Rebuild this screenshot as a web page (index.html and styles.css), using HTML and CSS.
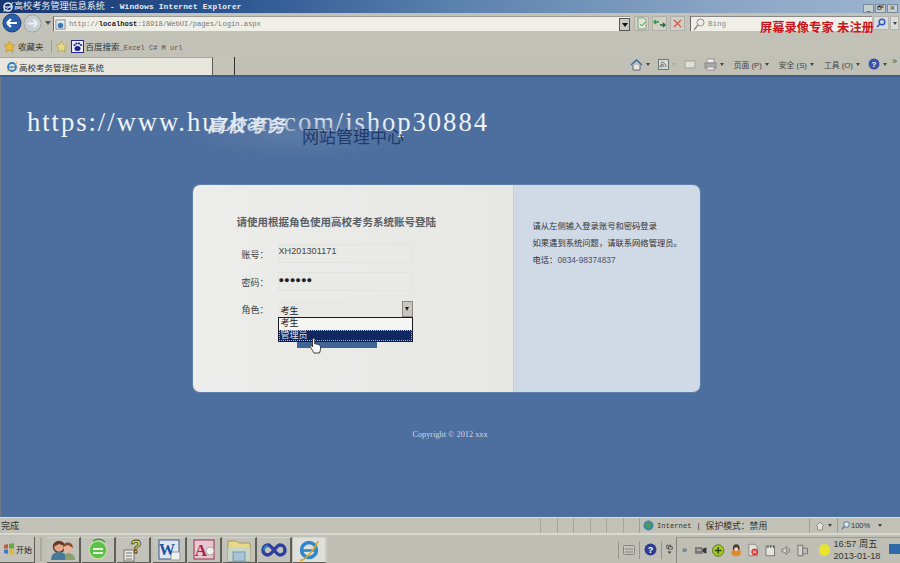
FILE: index.html
```html
<!DOCTYPE html>
<html lang="zh">
<head>
<meta charset="utf-8">
<title>高校考务管理信息系统</title>
<link rel="stylesheet" href="styles.css">
</head>
<body>
<div class="screen">
  <header class="titlebar">
    <div class="title-left">
      <svg class="ie-sm" viewBox="0 0 12 12"><circle cx="6" cy="6" r="4" fill="none" stroke="#dfeaf5" stroke-width="1.6"/><path d="M3 6h6" stroke="#dfeaf5" stroke-width="1.2"/><path d="M1 10C3 11 9 5 11 1" fill="none" stroke="#dfeaf5"/></svg>
      <span class="title-cn">高校考务管理信息系统</span>
      <span class="title-en">- Windows Internet Explorer</span>
    </div>
    <div class="winbtns"><span class="winbtn">_</span><span class="winbtn">🗗</span><span class="winbtn">×</span></div>
  </header>

  <div class="addressrow">
    <div class="navbtns">
      <svg width="20" height="20" viewBox="0 0 20 20"><circle cx="10" cy="10" r="9" fill="#2a5ea8" stroke="#1a3c78"/><path d="M5 10h10M5 10l4-4M5 10l4 4" stroke="#fff" stroke-width="2.2" fill="none"/></svg>
      <svg width="19" height="19" viewBox="0 0 20 20"><circle cx="10" cy="10" r="9" fill="#c7cdd0" stroke="#9aa2a6"/><path d="M15 10H5M15 10l-4-4M15 10l-4 4" stroke="#eef1f2" stroke-width="2" fill="none"/></svg>
      <span class="navdrop"></span>
    </div>
    <div class="addr">
      <svg width="11" height="11" viewBox="0 0 12 12"><rect x="1" y="1" width="10" height="10" fill="#e6e9ea" stroke="#7d8a8f"/><circle cx="6" cy="7" r="3" fill="#3b78b8"/></svg>
      <span class="addr-url">http://<b>localhost</b>:18918/WebUI/pages/Login.aspx</span>
      <span class="combo-arrow"></span>
    </div>
    <div class="addr-tools">
      <span class="toolbtn"><svg width="12" height="13" viewBox="0 0 12 13"><path d="M2 1h6l2 2v9H2z" fill="#dfe6d8" stroke="#7fa87f"/><path d="M4 7l2 2 3-4" stroke="#5a9a5a" fill="none"/></svg></span>
      <span class="toolbtn"><svg width="13" height="11" viewBox="0 0 13 11"><path d="M1 4h5M3 2L1 4l2 2" stroke="#2f9a3a" stroke-width="1.4" fill="none"/><path d="M12 7H7M10 5l2 2-2 2" stroke="#1f6a30" stroke-width="1.4" fill="none"/></svg></span>
      <span class="toolbtn"><svg width="9" height="9" viewBox="0 0 10 10"><path d="M1 1l8 8M9 1l-8 8" stroke="#c8504a" stroke-width="1.4"/></svg></span>
    </div>
    <div class="search">
      <svg width="12" height="13" viewBox="0 0 12 13"><circle cx="7.5" cy="4.500" r="3.500" fill="none" stroke="#8a8f92"/><path d="M5 7l-4 5" stroke="#8a8f92" stroke-width="1.4"/></svg>
      <span class="search-text">Bing</span>
      <span class="watermark-red">屏幕录像专家 未注册</span>
    </div>
    <div class="search-btns">
      <span class="sbtn"><svg width="10" height="10" viewBox="0 0 10 10"><circle cx="6" cy="4" r="2.800" fill="none" stroke="#2a58c0" stroke-width="1.500"/><path d="M4 6L1 9" stroke="#2a58c0" stroke-width="1.600"/></svg></span>
      <span class="sbtn small"><i class="tri"></i></span>
    </div>
  </div>

  <div class="favrow">
    <svg width="13" height="13" viewBox="0 0 14 14"><path d="M7 1l2 4 4 .5-3 3 1 4.500-4-2.300L3 13l1-4.500-3-3L5 5z" fill="#e8b83a" stroke="#b88a20" stroke-width=".6"/></svg>
    <span class="fav-label">收藏夹</span>
    <span class="fav-sep"></span>
    <svg width="13" height="13" viewBox="0 0 14 14"><path d="M7 1l2 4 4 .5-3 3 1 4.500-4-2.300L3 13l1-4.500-3-3L5 5z" fill="#e9d98a" stroke="#a89a40" stroke-width=".7"/></svg>
    <svg class="baidu" width="13" height="13" viewBox="0 0 13 13"><rect x=".5" y=".5" width="12" height="12" fill="#e8ecf6" stroke="#27278f"/><ellipse cx="6.500" cy="8.500" rx="3" ry="2.500" fill="#22228f"/><circle cx="3.500" cy="5" r="1.100" fill="#22228f"/><circle cx="5.500" cy="3.500" r="1.100" fill="#22228f"/><circle cx="8" cy="3.500" r="1.100" fill="#22228f"/><circle cx="10" cy="5" r="1.100" fill="#22228f"/></svg>
    <span class="fav-label">百度搜索<span class="fav-en">_Excel C# M url</span></span>
  </div>

  <div class="tabrow">
    <div class="tab">
      <svg class="ie-tab" width="12" height="12" viewBox="0 0 12 12"><circle cx="6" cy="6" r="4" fill="none" stroke="#2f7fc0" stroke-width="1.800"/><path d="M3 6h6" stroke="#2f7fc0" stroke-width="1.300"/><path d="M1 10C3 11 9 5 11 1" fill="none" stroke="#d8a830"/></svg>
      <span>高校考务管理信息系统</span>
    </div>
    <div class="tab-new"></div>
    <div class="cmdbar">
      <svg width="13" height="13" viewBox="0 0 13 13"><path d="M1 7l5.500-5L12 7" fill="none" stroke="#3a6aa8" stroke-width="1.500"/><path d="M3 7v5h7V7" fill="#e8e8e0" stroke="#667"/></svg><i class="tri"></i>
      <svg class="cmd-gap" width="11" height="11" viewBox="0 0 11 11"><rect x=".5" y=".5" width="10" height="10" fill="#d6dad6" stroke="#6f7a78"/><path d="M3 8a1 1 0 1 1 .1 0M3 5a3 3 0 0 1 3 3M3 3a5 5 0 0 1 5 5" fill="none" stroke="#6f7a78"/></svg><i class="tri faint"></i>
      <svg class="cmd-gap" width="12" height="9" viewBox="0 0 12 9"><path d="M1 1h10v7H1z" fill="#dedfd8" stroke="#9a9f98"/></svg>
      <svg class="cmd-gap" width="13" height="13" viewBox="0 0 13 13"><rect x="3" y="1" width="7" height="4" fill="#eee" stroke="#999"/><rect x="1" y="5" width="11" height="5" fill="#aaa" stroke="#888"/><rect x="3" y="9" width="7" height="3" fill="#eee" stroke="#999"/></svg><i class="tri"></i>
      <span class="cmd-text">页面 (P)</span><i class="tri"></i>
      <span class="cmd-text">安全 (S)</span><i class="tri"></i>
      <span class="cmd-text">工具 (O)</span><i class="tri"></i>
      <svg class="cmd-gap" width="12" height="12" viewBox="0 0 12 12"><circle cx="6" cy="6" r="5.500" fill="#3a52a8"/><text x="6" y="9" text-anchor="middle" font-size="8" font-weight="700" fill="#fff" font-family="Liberation Sans">?</text></svg><i class="tri"></i>
      <span class="chev">»</span>
    </div>
  </div>

  <main class="content">
    <div class="promo">https://www.huzhan.com/ishop30884</div>
    <div class="logo">
      <span class="logo-a">高校考务</span>
      <span class="logo-b">网站管理中心</span>
    </div>
    <section class="card">
      <div class="card-left">
        <h1 class="card-title">请使用根据角色使用高校考务系统账号登陆</h1>
        <div class="form-row"><label class="form-label">账号：</label><div class="field">XH201301171</div></div>
        <div class="form-row"><label class="form-label">密码：</label><div class="field dots">●●●●●●</div></div>
        <div class="form-row role">
          <label class="form-label">角色：</label>
          <div class="select">
            <span>考生</span><span class="select-arrow"></span>
            <ul class="dropdown">
              <li>考生</li>
              <li class="selected">管理员</li>
            </ul>
          </div>
        </div>
        <div class="login-btn"></div>
        <svg class="cursor" width="13" height="17" viewBox="0 0 13 17"><path d="M4 1.500c1-.6 1.700 0 1.700 1V7l1-.2 1.300.3 1.200.4 1.400.6c.8.500.9 1.200.9 2v2.400L10.500 16H5L3.500 13.500 1 9.500c-.4-1 .5-1.500 1.300-1L3.500 10V2.500z" fill="#fff" stroke="#2a2a30" stroke-width=".9"/></svg>
      </div>
      <aside class="card-right">
        <p>请从左侧输入登录账号和密码登录</p>
        <p>如果遇到系统问题，请联系网络管理员。</p>
        <p>电话：<span class="phone">0834-98374837</span></p>
      </aside>
    </section>
    <footer class="copyright">Copyright © 2012 xxx</footer>
  </main>

  <div class="statusbar">
    <span class="status-text">完成</span>
    <div class="status-cells"><i></i><i></i><i></i><i></i><i></i><i></i></div>
    <div class="status-zone">
      <svg width="11" height="11" viewBox="0 0 11 11"><circle cx="5.500" cy="5.500" r="5" fill="#3d8a9a"/><path d="M2 4c2-2 3 1 5 0s1 3-1 4-2-2-4-4" fill="#4f9a5c"/></svg>
      <span class="zone-en">Internet</span><span class="zone-sep">|</span><span class="zone-cn">保护模式：禁用</span>
    </div>
    <div class="status-mini"><svg width="10" height="10" viewBox="0 0 10 10"><path d="M1 5l4-4 4 4M2.500 5v4h5V5" fill="#e4e4dc" stroke="#8b8f88"/></svg><i class="tri"></i></div>
    <div class="status-zoom"><svg width="9" height="9" viewBox="0 0 9 9"><circle cx="5.500" cy="3.500" r="2.800" fill="#dfe8ee" stroke="#49759a"/><path d="M3.500 5.500L1 8" stroke="#49759a" stroke-width="1.300"/></svg><span>100%</span><i class="tri"></i></div>
    <div class="grip"></div>
  </div>

  <nav class="taskbar">
    <div class="start">
      <svg width="12" height="12" viewBox="0 0 12 12"><path d="M1 2l4-1v4.500H1z" fill="#c8583a"/><path d="M6 1l5-1v5.500H6z" fill="#6aa83a"/><path d="M1 6.500h4V11l-4-1z" fill="#3a7ac8"/><path d="M6 6.500h5V12l-5-1z" fill="#e2b83a"/></svg>
      <span>开始</span>
    </div>
    <span class="task-sep"></span>
    <div class="taskbtn">
      <svg width="26" height="22" viewBox="0 0 26 22"><circle cx="9" cy="8" r="5.500" fill="#e3a78a" stroke="#6a3a2a" stroke-width="1.500"/><path d="M3 8C3 1 14 1 15 7L9 5z" fill="#6a3a26"/><circle cx="18" cy="9" r="4.500" fill="#e8b59a"/><path d="M13 8c0-6 10-6 10 1l-5-3z" fill="#8a4a30"/><path d="M1 21c0-6 4-8 8-8s8 2 8 8z" fill="#4a7a9a"/><path d="M15 21c0-5 1-7 3-7 4 0 7 2 7 7z" fill="#8aa270"/></svg>
    </div>
    <div class="taskbtn">
      <svg width="22" height="24" viewBox="0 0 22 24"><circle cx="11" cy="12" r="9" fill="#5cc04a" stroke="#c8d8a0" stroke-width="1.500"/><rect x="6" y="10" width="10" height="2" fill="#e8f2d8"/><rect x="6" y="14" width="10" height="2" fill="#e8f2d8"/><path d="M6 3c4-3 9-2 12 1" stroke="#3a9a3a" stroke-width="1.500" fill="none"/></svg>
    </div>
    <div class="taskbtn">
      <svg width="22" height="24" viewBox="0 0 22 24"><rect x="2" y="12" width="10" height="11" fill="#e8e8e0" stroke="#777"/><path d="M4 15h6M4 18h6M4 21h6" stroke="#777"/><text x="14" y="15" text-anchor="middle" font-size="18" font-weight="700" fill="#ece64a" stroke="#3a3a18" stroke-width=".8" font-family="Liberation Sans">?</text></svg>
    </div>
    <div class="taskbtn">
      <svg width="24" height="24" viewBox="0 0 24 24"><rect x="2" y="2" width="20" height="19" fill="#dfe6ef" stroke="#3a5a8a"/><path d="M14 14h9v8h-9z" fill="#f0f0ee" stroke="#999"/><text x="10" y="17" text-anchor="middle" font-size="16" font-weight="700" fill="#1f4f9f" font-family="Liberation Serif">W</text></svg>
    </div>
    <div class="taskbtn">
      <svg width="24" height="24" viewBox="0 0 24 24"><rect x="2" y="2" width="20" height="19" fill="#e6c8d0" stroke="#9a3050"/><circle cx="18" cy="13" r="4" fill="#f4f0f0" stroke="#aaa"/><text x="9" y="18" text-anchor="middle" font-size="17" font-weight="700" fill="#b01e48" font-family="Liberation Serif">A</text></svg>
    </div>
    <div class="taskbtn">
      <svg width="26" height="24" viewBox="0 0 26 24"><path d="M2 3h9l2 2h11v18H2z" fill="#e6d98a" stroke="#a8985a"/><path d="M2 9h22v14H2z" fill="#c8d6c8"/><rect x="7" y="14" width="12" height="9" fill="#a8c4d6" stroke="#7a98a8"/></svg>
    </div>
    <div class="taskbtn">
      <svg width="26" height="14" viewBox="0 0 26 14"><path d="M7 2c4 0 8 10 12 10a5 5 0 0 0 0-10c-4 0-8 10-12 10a5 5 0 0 1 0-10z" fill="none" stroke="#2e3fa0" stroke-width="3.500"/><path d="M3 7a4 4 0 0 1 4-4" stroke="#2a88a8" stroke-width="2.500" fill="none"/></svg>
    </div>
    <div class="taskbtn active">
      <svg width="24" height="24" viewBox="0 0 24 24"><circle cx="12" cy="12" r="7.500" fill="none" stroke="#2f86c8" stroke-width="3.500"/><path d="M5 12.500h14" stroke="#2f86c8" stroke-width="2.600"/><path d="M3 22C7 24 18 11 21 3" fill="none" stroke="#d8a830" stroke-width="1.800"/></svg>
    </div>
    <div class="quick">
      <span class="quick-sep"></span>
      <svg width="12" height="10" viewBox="0 0 12 10"><rect x=".5" y=".5" width="11" height="9" rx="1" fill="#c4c4bc" stroke="#85857f"/><path d="M2 4h8M2 7h8" stroke="#85857f"/></svg>
      <span class="quick-sep"></span>
      <svg width="13" height="13" viewBox="0 0 13 13"><circle cx="6.500" cy="6.500" r="6" fill="#2f3d98"/><text x="6.500" y="10" text-anchor="middle" font-size="9" font-weight="700" fill="#fff" font-family="Liberation Sans">?</text></svg>
      <span class="quick-sep"></span>
      <svg width="7" height="13" viewBox="0 0 9 13"><rect x="1" y="1" width="5" height="4" fill="none" stroke="#444"/><rect x="3" y="3" width="5" height="3" fill="#c4c4bc" stroke="#444"/><path d="M2 9h5l-2.500 3z" fill="#333"/></svg>
    </div>
    <div class="tray">
      <span class="tray-chev">»</span>
      <svg width="14" height="11" viewBox="0 0 14 11"><path d="M1 2h8v7H1z" fill="#777"/><path d="M9 4l4-2v7L9 7z" fill="#333"/><path d="M3 5h4" stroke="#eee"/></svg>
      <svg width="13" height="13" viewBox="0 0 13 13"><circle cx="6.500" cy="6.500" r="6" fill="#a8c42a" stroke="#5a7a1a"/><path d="M6.500 3v7M3 6.500h7" stroke="#2a4a1a" stroke-width="1.500"/></svg>
      <svg width="13" height="14" viewBox="0 0 13 14"><ellipse cx="6.500" cy="5" rx="3.500" ry="4" fill="#4a3a30"/><ellipse cx="6.500" cy="10" rx="5" ry="3.500" fill="#e08a30"/><circle cx="6.500" cy="6" r="2" fill="#f0dcc8"/></svg>
      <svg width="13" height="14" viewBox="0 0 13 14"><path d="M2 1h6l3 3v9H2z" fill="#e4e4de" stroke="#888"/><circle cx="8" cy="9" r="3.500" fill="#d83a3a"/><path d="M6.500 7.500l3 3M9.500 7.500l-3 3" stroke="#fff"/></svg>
      <svg width="12" height="13" viewBox="0 0 12 13"><rect x="1" y="2" width="9" height="10" fill="#e4e4de" stroke="#777"/><path d="M3 1v3M6 1v3M9 1v3" stroke="#555"/></svg>
      <svg width="11" height="11" viewBox="0 0 11 11"><path d="M1 4h2l3-3v9L3 7H1z" fill="#d4d4cc" stroke="#777"/><path d="M8 3c1 1.500 1 3.500 0 5" stroke="#777" fill="none"/></svg>
      <svg width="12" height="13" viewBox="0 0 12 13"><rect x="1" y="1" width="5" height="11" fill="#d4d4cc" stroke="#777"/><path d="M6 4h5v6H6z" fill="#bbb" stroke="#777"/></svg>
      <span class="sun"></span>
      <div class="clock"><span>16:57 周五</span><span>2013-01-18</span></div>
      <span class="show-desktop"></span>
    </div>
  </nav>
</div>
</body>
</html>
```

FILE: styles.css
```css
* { box-sizing: border-box; }
html, body { margin: 0; padding: 0; }
body { font-family: "Liberation Sans", "Noto Sans CJK SC", sans-serif; background: #bfbfb5; }
.screen { width: 900px; height: 563px; overflow: hidden; display: flex; flex-direction: column; color: #2c2c2c; background: #c0c0b6; }
i { display: block; }
.tri { width: 0; height: 0; border-left: 2.500px solid transparent; border-right: 2.500px solid transparent; border-top: 3px solid #444; }
.tri.faint { border-top-color: #aaa; }

.titlebar { height: 13px; flex: none; display: flex; justify-content: space-between; align-items: center; background: linear-gradient(90deg, #17356e 0%, #2c5590 25%, #5a80ad 50%, #8aa5c4 80%, #9cb4cd 100%); color: #e8eef6; padding: 0 2px 0 2px; }
.title-left { display: flex; align-items: center; gap: 0; }
.ie-sm { width: 12px; height: 12px; }
.title-cn { font-size: 9.100px; line-height: 13px; }
.title-en { font-family: "Liberation Mono", monospace; font-weight: 700; font-size: 7.800px; margin-left: 5px; letter-spacing: .2px; }
.winbtns { display: flex; gap: 1px; margin-top: 3px; }
.winbtn { width: 11px; height: 9px; background: #c8ced0; border: 1px solid #7a8a9a; font-size: 7px; line-height: 7px; text-align: center; color: #222; overflow: hidden; font-family: "DejaVu Sans", sans-serif; }

.addressrow { height: 20px; flex: none; display: flex; align-items: center; background: #c2c2b8; }
.navbtns { width: 53px; padding-left: 2px; display: flex; align-items: center; gap: 1px; }
.navdrop { width: 0; height: 0; margin-left: 2px; border-left: 3px solid transparent; border-right: 3px solid transparent; border-top: 4px solid #555; }
.addr { width: 577px; height: 15px; margin-top: 1px; display: flex; align-items: center; gap: 1px; padding-left: 1px; background: #efefe8; border-left: 1px solid #666; border-top: 1px solid #9c9c94; position: relative; }
.addr-url { font-family: "Liberation Mono", monospace; font-size: 7.200px; color: #777; flex: 1; letter-spacing: -.050px; margin-left: 2px; }
.addr-url b { color: #222; }
.combo-arrow { width: 11px; height: 13px; background: #c8c8c0; border: 1px solid #555; position: relative; }
.combo-arrow::after { content: ""; position: absolute; left: 2px; top: 4px; border-left: 3px solid transparent; border-right: 3px solid transparent; border-top: 4px solid #111; }
.addr-tools { display: flex; gap: 3px; margin-left: 4px; }
.toolbtn { width: 15px; height: 15px; background: #cfcfc6; border: 1px solid #b0b0a8; display: flex; align-items: center; justify-content: center; }
.search { width: 182px; height: 15px; margin-left: 5px; margin-top: 1px; display: flex; align-items: center; background: #efefe8; border-left: 1px solid #666; border-top: 1px solid #888; padding-left: 2px; }
.search-text { font-family: "Liberation Mono", monospace; font-size: 7.500px; color: #888; margin-left: 3px; flex: 1; }
.watermark-red { color: #c8161c; font-size: 12.300px; font-weight: 700; line-height: 15px; margin-top: 8px; white-space: nowrap; margin-right: -2px; }
.search-btns { display: flex; gap: 1px; margin-left: 1px; }
.sbtn { width: 16px; height: 14px; background: #d8dcdc; border: 1px solid #b5b5ad; display: flex; align-items: center; justify-content: center; }
.sbtn.small { width: 9px; }

.favrow { height: 24px; flex: none; display: flex; align-items: center; padding: 2px 0 0 3px; background: #c1c1b7; font-size: 8.500px; }
.fav-label { margin-left: 2px; white-space: nowrap; color: #333; }
.fav-sep { width: 1px; height: 13px; background: #a0a098; margin: 0 3px 0 7px; }
.baidu { margin-left: 3px; }
.fav-en { font-family: "Liberation Mono", monospace; font-size: 7px; color: #555; }

.tabrow { height: 20px; flex: none; display: flex; align-items: flex-end; background: #c0c0b6; border-bottom: 2px solid #3f5f89; }
.tab { width: 213px; height: 18px; display: flex; align-items: center; gap: 1px; padding-left: 6px; background: #e6e6df; border-right: 1px solid #5a5a55; border-top: 1px solid #a8a8a0; font-size: 8.500px; color: #333; }
.tab-new { width: 22px; height: 18px; border-right: 1px solid #333; background: #c4c4ba; }
.cmdbar { flex: 1; height: 18px; display: flex; align-items: center; justify-content: flex-end; gap: 3px; padding: 0 3px 4px 0; font-size: 7.800px; color: #444; }
.cmd-gap { margin-left: 5px; }
.cmd-text { margin-left: 7px; white-space: nowrap; }
.chev { font-size: 9px; margin-left: 2px; margin-top: -6px; }

.content { flex: 1; position: relative; background: #4d6f9f; display: flex; flex-direction: column; align-items: center; padding: 108px 9px 0 0; border-left: 1px solid #6e7780; }
.promo { position: absolute; left: 26px; top: 27px; font-family: "Liberation Serif", serif; font-size: 26.700px; letter-spacing: 1.920px; color: #eef3f6; white-space: nowrap; line-height: 36px; }
.logo { position: absolute; left: 190px; top: 36px; width: 220px; height: 44px; background: radial-gradient(ellipse at center, rgba(98,128,170,.7) 0%, rgba(77,111,159,0) 72%); }
.logo-a { position: absolute; left: 16px; top: -2px; font-size: 18px; font-style: italic; font-weight: 700; color: #dfe6ee; letter-spacing: 2px; white-space: nowrap; }
.logo-b { position: absolute; left: 111px; top: 13px; font-size: 17px; color: #1f3a69; white-space: nowrap; line-height: 24px; }
.card { width: 507px; height: 207px; display: flex; border-radius: 7px; overflow: hidden; flex: none; box-shadow: 0 0 0 1px rgba(130,160,195,.35); }
.card-left { width: 321px; position: relative; background: linear-gradient(90deg, #ececea, #e7e7e4); padding: 30px 0 0 44px; border-right: 1px solid #c5ccd3; }
.card-title { margin: 0 0 15px; font-size: 10.500px; line-height: 14px; font-weight: 700; color: #5a5f66; white-space: nowrap; }
.form-row { display: flex; align-items: center; height: 19px; margin-bottom: 9px; }
.form-label { width: 41px; padding-left: 5px; font-size: 9px; color: #3d3d3d; white-space: nowrap; padding-top: 1px; }
.field { width: 135px; height: 19px; padding: 0 0 4px 0; background: #e9e9e6; border: 1px solid #e2e2df; font-size: 9px; line-height: 12px; color: #444; letter-spacing: .1px; }
.field.dots { font-size: 9.300px; line-height: 14px; color: #222; letter-spacing: 0; padding-left: 0; }
.role { align-items: flex-start; height: 17px; margin-bottom: 0; }
.role .form-label { padding-top: 3px; }
.select { width: 135px; height: 17px; position: relative; background: #e8e8e5; padding: 5px 0 0 3px; font-size: 9px; line-height: 13px; color: #222; }
.select-arrow { position: absolute; right: 0; top: 1px; width: 11px; height: 16px; background: #c6c6be; border: 1px solid #8a8a84; }
.select-arrow::after { content: ""; position: absolute; left: 2px; top: 5px; border-left: 2.500px solid transparent; border-right: 2.500px solid transparent; border-top: 4px solid #222; }
.dropdown { position: absolute; z-index: 2; left: 0; top: 17px; width: 135px; height: 25px; margin: 0; padding: 0; list-style: none; background: #f5f5f2; border: 1px solid #1b1b25; }
.dropdown li { height: 11.500px; line-height: 11.500px; font-size: 9px; padding-left: 2px; color: #222; }
.dropdown li.selected { background: #11275f; color: #dde2ee; outline: 1px dotted #b8bcc8; outline-offset: -1px; }
.login-btn { width: 80px; height: 13px; margin: 18px 0 0 60px; background: #3f6595; }
.cursor { position: absolute; left: 116px; top: 152px; z-index: 3; }
.card-right { flex: 1; background: #d0d9e6; padding: 33px 0 0 19px; font-size: 8.300px; color: #333; }
.card-right p { margin: 0; height: 17px; line-height: 17px; white-space: nowrap; }
.phone { color: #4a5260; }
.copyright { margin: 37px 0 0 8px; font-family: "Liberation Serif", serif; font-size: 8.300px; line-height: 12px; color: #cdd6e2; }

.statusbar { height: 16px; flex: none; display: flex; align-items: center; background: #c1c1b7; border-top: 1px solid #e1e1d9; font-size: 9px; color: #333; }
.status-text { width: 540px; padding-left: 1px; }
.status-cells { display: flex; height: 16px; }
.status-cells i { width: 16.500px; height: 15px; border-left: 1px solid #a5a59d; }
.status-zone { width: 171px; height: 15px; display: flex; align-items: center; gap: 3px; padding-left: 3px; border-left: 1px solid #a0a098; border-right: 1px solid #a0a098; }
.zone-en { font-family: "Liberation Mono", monospace; font-size: 7.200px; }
.zone-sep { margin: 0 3px; font-size: 8px; }
.zone-cn { font-size: 8.800px; white-space: nowrap; }
.status-mini { width: 28px; height: 15px; display: flex; align-items: center; justify-content: center; gap: 3px; border-right: 1px solid #a0a098; }
.status-zoom { width: 52px; display: flex; align-items: center; gap: 1px; font-size: 7.500px; padding-left: 3px; }
.status-zoom .tri { margin-left: 7px; }
.grip { flex: 1; }

.taskbar { height: 30px; flex: none; display: flex; align-items: center; background: #bfbfb5; border-top: 2px solid #d8d8d0; padding-top: 1px; }
.start { width: 35px; height: 26px; display: flex; align-items: center; gap: 1px; padding-left: 3px; background: #c3c3bb; border-right: 1px solid #5f5f59; border-bottom: 1px solid #5f5f59; font-size: 8px; color: #222; }
.task-sep { width: 2px; height: 23px; margin: 0 5px 0 5px; background: #a8a8a0; }
.taskbtn { width: 34px; height: 26px; margin-right: 1.200px; display: flex; align-items: center; justify-content: center; background: #c2c2ba; border-right: 2px solid #5f5f59; border-bottom: 1px solid #5f5f59; border-top: 1px solid #d4d4cc; }
.taskbtn.active { background: #e0e0da; border-right-color: #ccccc4; }
.quick { flex: 1; display: flex; align-items: center; justify-content: flex-end; gap: 4px; padding-right: 3px; }
.quick-sep { width: 1px; height: 18px; background: #96968e; }
.tray { width: 224px; height: 26px; display: flex; align-items: center; gap: 5px; padding-left: 5px; border-left: 1px solid #85857f; border-top: 1px solid #9c9c94; }
.tray-chev { font-size: 9px; margin-right: 2px; color: #333; }
.sun { width: 12px; height: 12px; border-radius: 50%; background: #e8e42c; margin-left: 6px; }
.clock { display: flex; flex-direction: column; font-size: 9.200px; line-height: 12px; color: #333; white-space: nowrap; margin-left: -2px; }
.show-desktop { width: 11px; height: 10px; background: #2e6aa8; margin-left: 4px; margin-top: -3px; }
```
